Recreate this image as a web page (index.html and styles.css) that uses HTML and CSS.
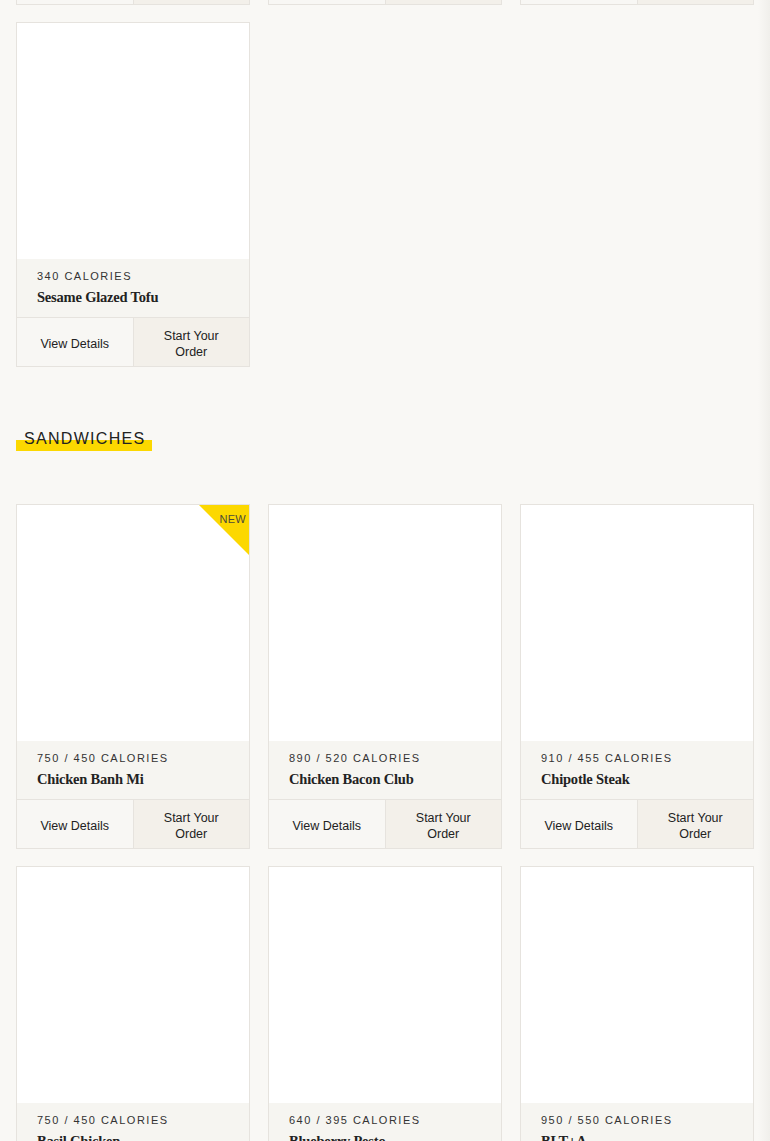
FILE: index.html
```html
<!DOCTYPE html>
<html>

<head>
  <meta charset="UTF-8">
  <meta name="viewport" content="width=device-width, initial-scale=1">
  <title>Menu</title>
  <link rel="stylesheet" href="styles.css">
</head>

<body>
  <main class="menu">

    <section class="category">
      <div class="grid">
        <!-- previous row, scrolled out of view: only the button strips show -->
        <div class="card card-past">
          <div class="card-actions">
            <div class="btn-details"></div>
            <div class="btn-order"></div>
          </div>
        </div>
        <div class="card card-past">
          <div class="card-actions">
            <div class="btn-details"></div>
            <div class="btn-order"></div>
          </div>
        </div>
        <div class="card card-past">
          <div class="card-actions">
            <div class="btn-details"></div>
            <div class="btn-order"></div>
          </div>
        </div>
        <div class="card">
          <div class="card-img"></div>
          <div class="card-info">
            <p class="cal">340 CALORIES</p>
            <h3>Sesame Glazed Tofu</h3>
          </div>
          <div class="card-actions">
            <button class="btn-details">View Details</button>
            <button class="btn-order">Start Your Order</button>
          </div>
        </div>
      </div>
    </section>

    <section class="category">
      <h2 class="category-title"><span>SANDWICHES</span></h2>
      <div class="grid">
        <div class="card">
          <div class="card-img">
            <span class="badge-new">NEW</span>
          </div>
          <div class="card-info">
            <p class="cal">750 / 450 CALORIES</p>
            <h3>Chicken Banh Mi</h3>
          </div>
          <div class="card-actions">
            <button class="btn-details">View Details</button>
            <button class="btn-order">Start Your Order</button>
          </div>
        </div>
        <div class="card">
          <div class="card-img"></div>
          <div class="card-info">
            <p class="cal">890 / 520 CALORIES</p>
            <h3>Chicken Bacon Club</h3>
          </div>
          <div class="card-actions">
            <button class="btn-details">View Details</button>
            <button class="btn-order">Start Your Order</button>
          </div>
        </div>
        <div class="card">
          <div class="card-img"></div>
          <div class="card-info">
            <p class="cal">910 / 455 CALORIES</p>
            <h3>Chipotle Steak</h3>
          </div>
          <div class="card-actions">
            <button class="btn-details">View Details</button>
            <button class="btn-order">Start Your Order</button>
          </div>
        </div>
        <div class="card">
          <div class="card-img"></div>
          <div class="card-info">
            <p class="cal">750 / 450 CALORIES</p>
            <h3>Basil Chicken</h3>
          </div>
          <div class="card-actions">
            <button class="btn-details">View Details</button>
            <button class="btn-order">Start Your Order</button>
          </div>
        </div>
        <div class="card">
          <div class="card-img"></div>
          <div class="card-info">
            <p class="cal">640 / 395 CALORIES</p>
            <h3>Blueberry Pesto</h3>
          </div>
          <div class="card-actions">
            <button class="btn-details">View Details</button>
            <button class="btn-order">Start Your Order</button>
          </div>
        </div>
        <div class="card">
          <div class="card-img"></div>
          <div class="card-info">
            <p class="cal">950 / 550 CALORIES</p>
            <h3>BLT+A</h3>
          </div>
          <div class="card-actions">
            <button class="btn-details">View Details</button>
            <button class="btn-order">Start Your Order</button>
          </div>
        </div>
      </div>
    </section>

  </main>
</body>

</html>
```

FILE: styles.css
```css
*{
  box-sizing: border-box;
  margin: 0;
  padding: 0;
}

body{
  background: linear-gradient(to right, #f9f8f5 calc(100% - 12px), #f0efeb);
  font-family: "Liberation Sans", Arial, sans-serif;
  color: #222;
  overflow: hidden;
}

/* page is scrolled: only the last 5px of the previous row shows */
.menu{
  margin-top: -340px;
}

.grid{
  display: grid;
  grid-template-columns: repeat(3, 1fr);
  column-gap: 18px;
  row-gap: 17px;
  padding: 0 16px;
}

.card{
  border: 1px solid #e6e3de;
  background: #fff;
  display: flex;
  flex-direction: column;
}
.card-past{
  height: 345px;
  justify-content: flex-end;
}
.card-img{
  position: relative;
  height: 236px;
  background: #fff;
}
.card-info{
  height: 58px;
  padding: 10px 20px 0;
  background: #f6f5f1;
}
.cal{
  font-size: 11px;
  line-height: 14px;
  letter-spacing: 1.5px;
  color: #333;
  margin-bottom: 5px;
}
.card-info h3{
  font-family: "Liberation Serif", "Times New Roman", serif;
  font-size: 14.5px;
  line-height: 18px;
  font-weight: bold;
  color: #222;
  letter-spacing: -0.2px;
}

.card-actions{
  display: flex;
  height: 49px;
  border-top: 1px solid #e6e3de;
}
.card-actions button,
.card-actions div{
  flex: 1;
  border: none;
  font-family: "Liberation Sans", Arial, sans-serif;
  font-size: 12.5px;
  line-height: 16px;
  color: #222;
  padding: 3px 18px 0;
  cursor: pointer;
}
.btn-details{
  background: #f8f7f4;
}
.card-actions .btn-order{
  background: #f3f0ea;
  border-left: 1px solid #e6e3de;
}

.badge-new{
  position: absolute;
  top: 0;
  right: 0;
  width: 50px;
  height: 50px;
  background: #fcd800;
  clip-path: polygon(0 0, 100% 0, 100% 100%);
  font-size: 11px;
  line-height: 12px;
  letter-spacing: 0.3px;
  color: #4d4a3a;
  text-align: right;
  padding: 8px 3px 0 0;
}

.category-title{
  margin: 59px 0 53px;
  padding: 0 16px;
  font-weight: normal;
  line-height: 20px;
}
.category-title span{
  display: inline-block;
  font-size: 16px;
  line-height: 20px;
  letter-spacing: 1.3px;
  color: #222;
  padding: 0 7px 2px 8px;
  background: linear-gradient(transparent 11px, #fcd800 11px);
}
```
